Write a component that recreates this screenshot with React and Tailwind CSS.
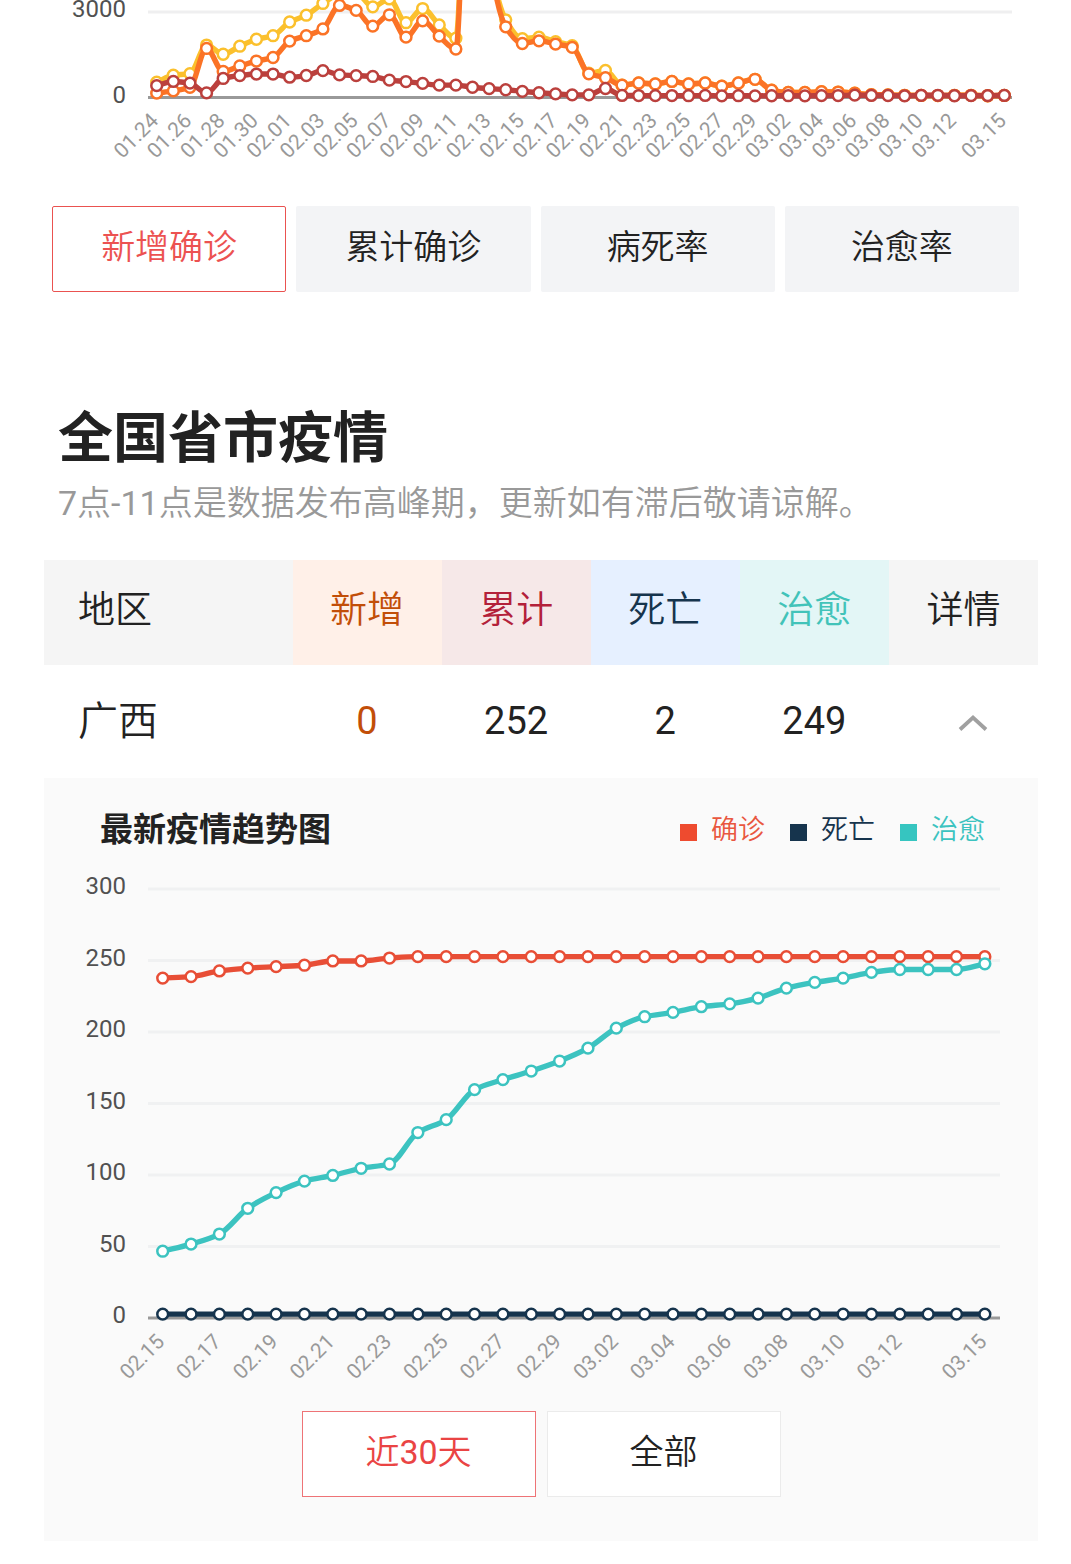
import { useState } from 'react';

const TABS = ['新增确诊', '累计确诊', '病死率', '治愈率'];
const RANGES = ['近30天', '全部'];

const LEGEND = [
    { name: '确诊', text: 'text-[#e9573f]', box: 'bg-[#ee4b2f]' },
    { name: '死亡', text: 'text-[#16344d]', box: 'bg-[#16344d]' },
    { name: '治愈', text: 'text-[#3cc3c0]', box: 'bg-[#36c5c0]' },
];

// Casos novos por dia no país, de 01.24 a 03.15
const NATIONAL = {
    suspected: [485, 735, 790, 1800, 1475, 1760, 2005, 2130, 2615, 2855, 3270, 3600, 3640, 3150, 3430, 2590, 3090, 2510, 2040, 15300, 5100, 2690, 2025, 2080, 1920, 1780, 805, 905, 380, 460, 425, 515, 425, 460, 350, 460, 590, 205, 125, 125, 150, 140, 100, 45, 40, 24, 19, 15, 24, 25, 8, 20],
    others: [100, 180, 310, 1680, 865, 1060, 1235, 1360, 1940, 2130, 2370, 3200, 3025, 2470, 2870, 2080, 2655, 2115, 1660, 15150, 5000, 2445, 1855, 1950, 1835, 1720, 785, 645, 380, 460, 425, 515, 425, 460, 350, 460, 590, 205, 125, 125, 150, 140, 100, 45, 40, 24, 19, 15, 24, 25, 8, 20],
    outside: [365, 515, 455, 110, 620, 720, 775, 775, 665, 725, 895, 745, 720, 690, 560, 510, 445, 385, 385, 310, 260, 220, 165, 115, 75, 40, 40, 265, 20, 15, 12, 15, 10, 20, 5, 10, 5, 8, 10, 5, 12, 16, 30, 20, 18, 5, 24, 25, 8, 12, 15, 20],
};

// 广西, de 02.15 a 03.15
const PROVINCE = {
    confirmed: [237, 238, 242, 244, 245, 246, 249, 249, 251, ...Array(21).fill(252)],
    cured: [46, 51, 58, 76, 87, 95, 99, 104, 107, 129, 138, 159, 166, 172, 179, 188, 202, 210, 213, 217, 219, 223, 230, 234, 237, 241, 243, 243, 243, 247],
    dead: Array(30).fill(2),
};

function dateLabels(month, day, count) {
    const d = new Date(2020, month - 1, day);
    return Array.from({ length: count }, () => {
        const s = `${String(d.getMonth() + 1).padStart(2, '0')}.${String(d.getDate()).padStart(2, '0')}`;
        d.setDate(d.getDate() + 1);
        return s;
    });
}

// Curva suave que não passa dos pontos
function smoothPath(pts) {
    const slope = pts.slice(1).map((p, i) => (p[1] - pts[i][1]) / (p[0] - pts[i][0]));
    const tan = pts.map((_, i) => {
        const a = slope[i - 1], b = slope[i];
        if (a === undefined) return b;
        if (b === undefined) return a;
        return a * b <= 0 ? 0 : (2 * a * b) / (a + b);
    });
    return pts.map((p, i) => {
        if (i === 0) return `M${p[0]} ${p[1]}`;
        const q = pts[i - 1];
        const h = (p[0] - q[0]) / 3;
        return `C${q[0] + h} ${q[1] + tan[i - 1] * h} ${p[0] - h} ${p[1] - tan[i] * h} ${p[0]} ${p[1]}`;
    }).join('');
}

// Os algarismos ficam em peso normal no meio do texto fino
function Mixed({ text }) {
    return text.split(/([-\d]+)/).map((s, i) => i % 2 ? <span key={i} className="font-normal">{s}</span> : s);
}

function Line({ values, x, y, color }) {
    const pts = values.map((v, i) => [x(i), y(v)]);
    return (
        <g stroke={color}>
            <path d={smoothPath(pts)} fill="none" strokeWidth="5.4" strokeLinejoin="round" />
            {pts.map((p, i) => <circle key={i} cx={p[0]} cy={p[1]} r="5.4" fill="white" strokeWidth="2.5" />)}
        </g>
    );
}

function DateAxis({ dates, x, y }) {
    const last = dates.length - 1;
    return (
        <g fill="#999" fontSize="21" textAnchor="end">
            {dates.map((d, i) => (i === last || (i % 2 === 0 && i < last - 1)) && (
                <text key={d} transform={`translate(${x(i) + 3} ${y}) rotate(-45)`}>{d}</text>
            ))}
        </g>
    );
}

function NationalChart() {
    const x = (i) => 156.7 + i * 16.62;
    const y = (v) => 96 - v * 0.0283;
    return (
        <svg viewBox="0 0 1071 170" className="block w-full" role="img" aria-label="新增确诊">
            <path d="M148 12H1012" stroke="#efeff0" strokeWidth="3" />
            <path d="M148 97.5H1012" stroke="#999" strokeWidth="3" />
            <g fill="#515151" fontSize="24" textAnchor="end">
                <text x="126" y="17">3000</text>
                <text x="126" y="103">0</text>
            </g>
            <Line values={NATIONAL.suspected} x={x} y={y} color="#fbc02d" />
            <Line values={NATIONAL.others} x={x} y={y} color="#fb7326" />
            <Line values={NATIONAL.outside} x={x} y={y} color="#bb403d" />
            <DateAxis dates={dateLabels(1, 24, 52)} x={x} y={122} />
        </svg>
    );
}

function ProvinceChart() {
    const x = (i) => 118.7 + i * 28.35;
    const y = (v) => 447 - v * 1.43;
    return (
        <svg viewBox="0 0 994 520" className="block w-full" role="img" aria-label="最新疫情趋势图">
            {[0, 50, 100, 150, 200, 250, 300].map(v => (
                <g key={v}>
                    <path d={`M104 ${y(v) + 1}H956`} stroke={v ? '#f0f1f2' : '#999'} strokeWidth="3" />
                    <text x="82" y={y(v) + 6} fill="#515151" fontSize="24" textAnchor="end">{v}</text>
                </g>
            ))}
            <Line values={PROVINCE.confirmed} x={x} y={y} color="#e84e36" />
            <Line values={PROVINCE.cured} x={x} y={y} color="#3cc3c0" />
            <Line values={PROVINCE.dead} x={x} y={y} color="#16344d" />
            <DateAxis dates={dateLabels(2, 15, 30)} x={x} y={473} />
        </svg>
    );
}

export default function App() {
    const [tab, setTab] = useState(TABS[0]);
    const [range, setRange] = useState(RANGES[0]);
    const [open, setOpen] = useState(true);

    return (
        <div className="min-h-screen bg-white pb-6 font-['Roboto','Noto_Sans_CJK_SC',sans-serif] text-[#222]">
            <NationalChart />

            <div className="mt-9 grid grid-cols-4 gap-[10px] px-[52px]">
                {TABS.map(t => (
                    <button key={t} onClick={() => setTab(t)} className={`h-[86px] rounded-xs border pb-1 text-[34px] font-[350] ${tab === t ? 'border-[#ea5250] bg-white text-[#ec5251]' : 'border-transparent bg-[#f3f4f6]'}`}>{t}</button>
                ))}
            </div>

            <header className="mt-[106px] px-[58px]">
                <h2 className="text-[55px] leading-[80px] font-bold">全国省市疫情</h2>
                <p className="text-[34px] leading-[50px] font-[350] text-[#999]">
                    <Mixed text="7点-11点是数据发布高峰期，更新如有滞后敬请谅解。" />
                </p>
            </header>

            <div className="mt-8 pr-[33px] pl-11">
                <table className="w-full table-fixed border-collapse text-center">
                    <colgroup>
                        <col className="w-[25%]" />
                        <col className="w-[15%]" />
                        <col className="w-[15%]" />
                        <col className="w-[15%]" />
                        <col className="w-[15%]" />
                        <col className="w-[15%]" />
                    </colgroup>
                    <thead>
                        <tr className="h-[105px] text-[37px]">
                            <th className="bg-[#f5f5f5] pb-1 pl-[34px] text-left font-[350]">地区</th>
                            <th className="bg-[#fff0e8] pb-1 font-[350] text-[#c24e08]">新增</th>
                            <th className="bg-[#f6e8e8] pb-1 font-[350] text-[#b3213a]">累计</th>
                            <th className="bg-[#e6f0ff] pb-1 font-[350] text-[#16344d]">死亡</th>
                            <th className="bg-[#e3f6f6] pb-1 font-[350] text-[#42c3b9]">治愈</th>
                            <th className="bg-[#f5f5f5] pb-1 font-[350]">详情</th>
                        </tr>
                    </thead>
                    <tbody>
                        <tr className="h-[113px] text-[38px]">
                            <td className="pl-[34px] text-left text-[40px] font-[350]">广西</td>
                            <td className="text-[#c24e08]">0</td>
                            <td>252</td>
                            <td>2</td>
                            <td>249</td>
                            <td>
                                <button onClick={() => setOpen(!open)} aria-label="详情" className="block w-full pl-5">
                                    <svg viewBox="0 0 32 20" className={`mx-auto h-5 w-8 ${open ? '' : 'rotate-180'}`} fill="none" stroke="#a0a0a0" strokeWidth="3.8">
                                        <path d="M3 17.5L16 5.5L29 17.5" />
                                    </svg>
                                </button>
                            </td>
                        </tr>
                    </tbody>
                </table>

                {open && (
                    <section className="bg-[#fafafa] pt-6 pb-11">
                        <div className="flex items-center justify-between pr-[53px] pl-14">
                            <h3 className="text-[33px] leading-[56px] font-bold">最新疫情趋势图</h3>
                            <ul className="flex gap-[25px] text-[27px] font-[350]">
                                {LEGEND.map(l => (
                                    <li key={l.name} className={`flex items-center gap-[14px] ${l.text}`}>
                                        <span className={`mt-1 size-[17px] ${l.box}`}></span>
                                        {l.name}
                                    </li>
                                ))}
                            </ul>
                        </div>

                        <div className="mt-3">
                            <ProvinceChart />
                        </div>

                        <div className="mt-[21px] flex justify-center gap-[11px]">
                            {RANGES.map(r => (
                                <button key={r} onClick={() => setRange(r)} className={`h-[86px] w-[234px] border bg-white pb-1 text-[34px] font-[350] ${range === r ? 'border-[#ee7376] text-[#ea4444]' : 'border-[#ebebeb]'}`}>
                                    <Mixed text={r} />
                                </button>
                            ))}
                        </div>
                    </section>
                )}
            </div>
        </div>
    );
}
